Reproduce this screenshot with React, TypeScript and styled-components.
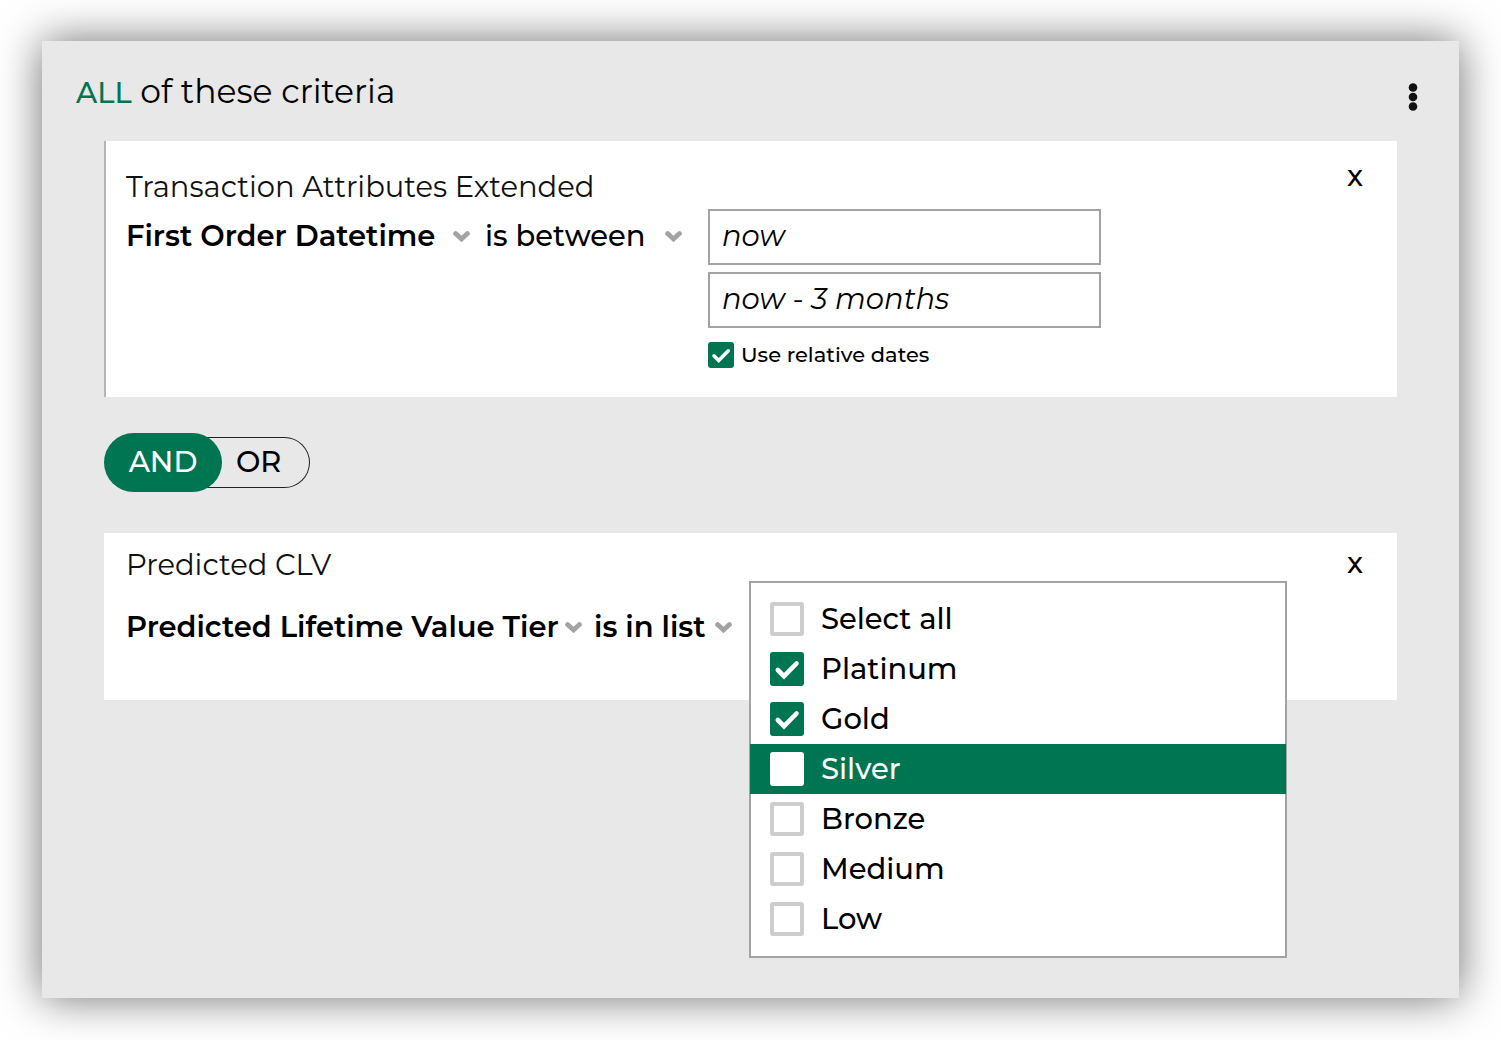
import React, { useState } from "react";
import styled, { createGlobalStyle, css } from "styled-components";

const green = "#007551";
const line = "#a3a3a3";

const GlobalStyle = createGlobalStyle`
  *, *::before, *::after { box-sizing: border-box; }
  body { margin: 0; background: #fff; }
  body, button, input, select {
    font-family: Montserrat, Inter, "Open Sans", sans-serif;
    font-size: 29px;
    font-weight: 500;
    color: #000;
  }
`;

const Page = styled.main`
  display: flex;
  min-height: 100vh;
  padding: 41px 42px 42px;
`;

const Panel = styled.section`
  flex: 1;
  min-width: 0;
  background: #e8e8e8;
  box-shadow: 0 0 42px rgba(0, 0, 0, 0.57);
`;

const Header = styled.header`
  display: flex;
  align-items: center;
  justify-content: space-between;
  height: 100px;
  padding: 2px 36px 0 34px;
`;

const Title = styled.h1`
  margin: 0;
  font-size: 33px;
  font-weight: 400;
  line-height: 40px;
`;

const Accent = styled.span`
  color: ${green};
  font-size: 29px;
  font-weight: 500;
`;

const IconButton = styled.button`
  display: flex;
  padding: 0 5px;
  margin-top: 10px;
  border: 0;
  background: none;
  cursor: pointer;
`;

const Body = styled.div`
  padding: 0 62px;
`;

const Card = styled.article<{ $marked?: boolean; $compact?: boolean }>`
  display: flex;
  justify-content: space-between;
  align-items: flex-start;
  padding: ${(p) => (p.$compact ? "12px 28px 44px 22px" : "26px 28px 29px 20px")};
  border-left: ${(p) => (p.$marked ? "2px solid #b5b5b5" : "0")};
  background: #fff;
`;

const CardTitle = styled.h2`
  margin: 0;
  font-size: 29px;
  font-weight: 400;
  line-height: 40px;
  color: #111;
`;

const CloseButton = styled.button<{ $raised?: boolean }>`
  padding: 0 6px;
  margin-top: ${(p) => (p.$raised ? "-11px" : "-2px")};
  border: 0;
  background: none;
  line-height: 40px;
  cursor: pointer;
`;

const Rule = styled.div<{ $gap: number }>`
  display: flex;
  align-items: flex-start;
  margin-top: ${(p) => p.$gap}px;
`;

const Picker = styled.div<{ $after: number }>`
  display: flex;
  align-items: center;
  height: 54px;
  margin-right: ${(p) => p.$after}px;
`;

const Select = styled.select<{ $width: number; $bold?: boolean }>`
  appearance: none;
  width: ${(p) => p.$width}px;
  height: 44px;
  padding: 0 0 2px;
  border: 0;
  background: none;
  font-weight: ${(p) => (p.$bold ? 600 : 500)};
  cursor: pointer;
`;

const Fields = styled.div`
  display: flex;
  flex-direction: column;
  gap: 7px;
  width: 393px;
`;

const TextField = styled.input`
  width: 100%;
  height: 56px;
  padding: 0 12px 4px;
  border: 2px solid ${line};
  background: #fff;
  font-style: italic;
  font-weight: 400;
`;

const CheckLabel = styled.label`
  display: flex;
  align-items: center;
  gap: 7px;
  height: 26px;
  margin-top: 7px;
  font-size: 21px;
`;

const LabelText = styled.span`
  padding-bottom: 2px;
`;

const Tick = styled.span<{ $size: number }>`
  display: grid;
  flex: none;
  width: ${(p) => p.$size}px;
  height: ${(p) => p.$size}px;
  > * { grid-area: 1 / 1; width: 100%; height: 100%; }
  svg { pointer-events: none; }
`;

const TickInput = styled.input<{ $plain?: boolean }>`
  appearance: none;
  margin: 0;
  border: 4px solid #cdcdcd;
  border-radius: 3px;
  background: #fff;
  ${(p) => p.$plain && css`border-color: #fff;`}
  &:checked { border-color: ${green}; background: ${green}; }
`;

const Toggle = styled.fieldset`
  display: flex;
  align-items: center;
  margin: 36px 0 41px;
  padding: 0;
  border: 0;
`;

const HiddenRadio = styled.input`
  appearance: none;
  width: 0;
  height: 0;
  margin: 0;
`;

const ToggleOn = styled.label`
  z-index: 1;
  display: flex;
  align-items: center;
  justify-content: center;
  width: 118px;
  height: 59px;
  border-radius: 30px;
  background: ${green};
  color: #fff;
`;

const ToggleOff = styled.label`
  display: flex;
  align-items: center;
  width: 118px;
  height: 51px;
  margin-left: -30px;
  padding-left: 44px;
  border: 1px solid #222;
  border-left: 0;
  border-radius: 0 26px 26px 0;
`;

const ValueBox = styled.div`
  position: relative;
  width: 538px;
  height: 56px;
  border: 1px solid ${line};
`;

const Menu = styled.ul`
  position: absolute;
  top: -20px;
  left: -1px;
  right: -1px;
  margin: 0;
  padding: 11px 0 12px;
  border: 2px solid ${line};
  background: #fff;
  list-style: none;
`;

const Option = styled.label<{ $active?: boolean }>`
  display: flex;
  align-items: center;
  gap: 17px;
  height: 50px;
  margin: 0 -1px;
  padding: 0 20px;
  ${(p) => p.$active && css`background: ${green}; color: #fff;`}
`;

const Chevron = () => (
  <svg width="17" height="12" viewBox="0 0 17 12" fill="none" aria-hidden="true">
    <path d="M2.6 3.6 8.5 9 14.4 3.6" stroke={line} strokeWidth="4.8" strokeLinecap="round" strokeLinejoin="miter" />
  </svg>
);

type CheckProps = { size: number; initial: boolean; plain?: boolean };

const Check = ({ size, initial, plain }: CheckProps) => {
  const [on, setOn] = useState(initial);
  return (
    <Tick $size={size}>
      <TickInput type="checkbox" checked={on} $plain={plain} onChange={() => setOn(!on)} />
      {on && (
        <svg viewBox="0 0 34 34" fill="none" aria-hidden="true">
          <path d="M7.8 18 14 24.2 26.5 11.5" stroke="#fff" strokeWidth="4.6" strokeLinecap="round" />
        </svg>
      )}
    </Tick>
  );
};

const tiers = [
  { name: "Select all", on: false },
  { name: "Platinum", on: true },
  { name: "Gold", on: true },
  { name: "Silver", on: false, active: true },
  { name: "Bronze", on: false },
  { name: "Medium", on: false },
  { name: "Low", on: false },
];

export default function App() {
  return (
    <Page>
      <GlobalStyle />
      <Panel>
        <Header>
          <Title><Accent>ALL</Accent> of these criteria</Title>
          <IconButton aria-label="More options">
            <svg width="10" height="30" viewBox="0 0 10 30" fill="#111">
              <circle cx="5" cy="5.5" r="4.3" />
              <circle cx="5" cy="15" r="4.3" />
              <circle cx="5" cy="24.5" r="4.3" />
            </svg>
          </IconButton>
        </Header>
        <Body>
          <Card $marked>
            <div>
              <CardTitle>Transaction Attributes Extended</CardTitle>
              <Rule $gap={2}>
                <Picker $after={15}>
                  <Select $width={327} $bold aria-label="Attribute"><option>First Order Datetime</option></Select>
                  <Chevron />
                </Picker>
                <Picker $after={26}>
                  <Select $width={180} aria-label="Condition"><option>is between</option></Select>
                  <Chevron />
                </Picker>
                <Fields>
                  <TextField aria-label="From" defaultValue="now" />
                  <TextField aria-label="To" defaultValue="now - 3 months" />
                  <CheckLabel><Check size={26} initial /><LabelText>Use relative dates</LabelText></CheckLabel>
                </Fields>
              </Rule>
            </div>
            <CloseButton $raised>x</CloseButton>
          </Card>
          <Toggle aria-label="Combine with">
            <ToggleOn><HiddenRadio type="radio" name="join" defaultChecked /><LabelText>AND</LabelText></ToggleOn>
            <ToggleOff><HiddenRadio type="radio" name="join" /><LabelText>OR</LabelText></ToggleOff>
          </Toggle>
          <Card $compact>
            <div>
              <CardTitle>Predicted CLV</CardTitle>
              <Rule $gap={15}>
                <Picker $after={12}>
                  <Select $width={439} $bold aria-label="Attribute"><option>Predicted Lifetime Value Tier</option></Select>
                  <Chevron />
                </Picker>
                <Picker $after={17}>
                  <Select $width={121} $bold aria-label="Condition"><option>is in list</option></Select>
                  <Chevron />
                </Picker>
                <ValueBox>
                  <Menu>
                    {tiers.map((t) => (
                      <li key={t.name}>
                        <Option $active={t.active}>
                          <Check size={34} initial={t.on} plain={t.active} />
                          <LabelText>{t.name}</LabelText>
                        </Option>
                      </li>
                    ))}
                  </Menu>
                </ValueBox>
              </Rule>
            </div>
            <CloseButton>x</CloseButton>
          </Card>
        </Body>
      </Panel>
    </Page>
  );
}
